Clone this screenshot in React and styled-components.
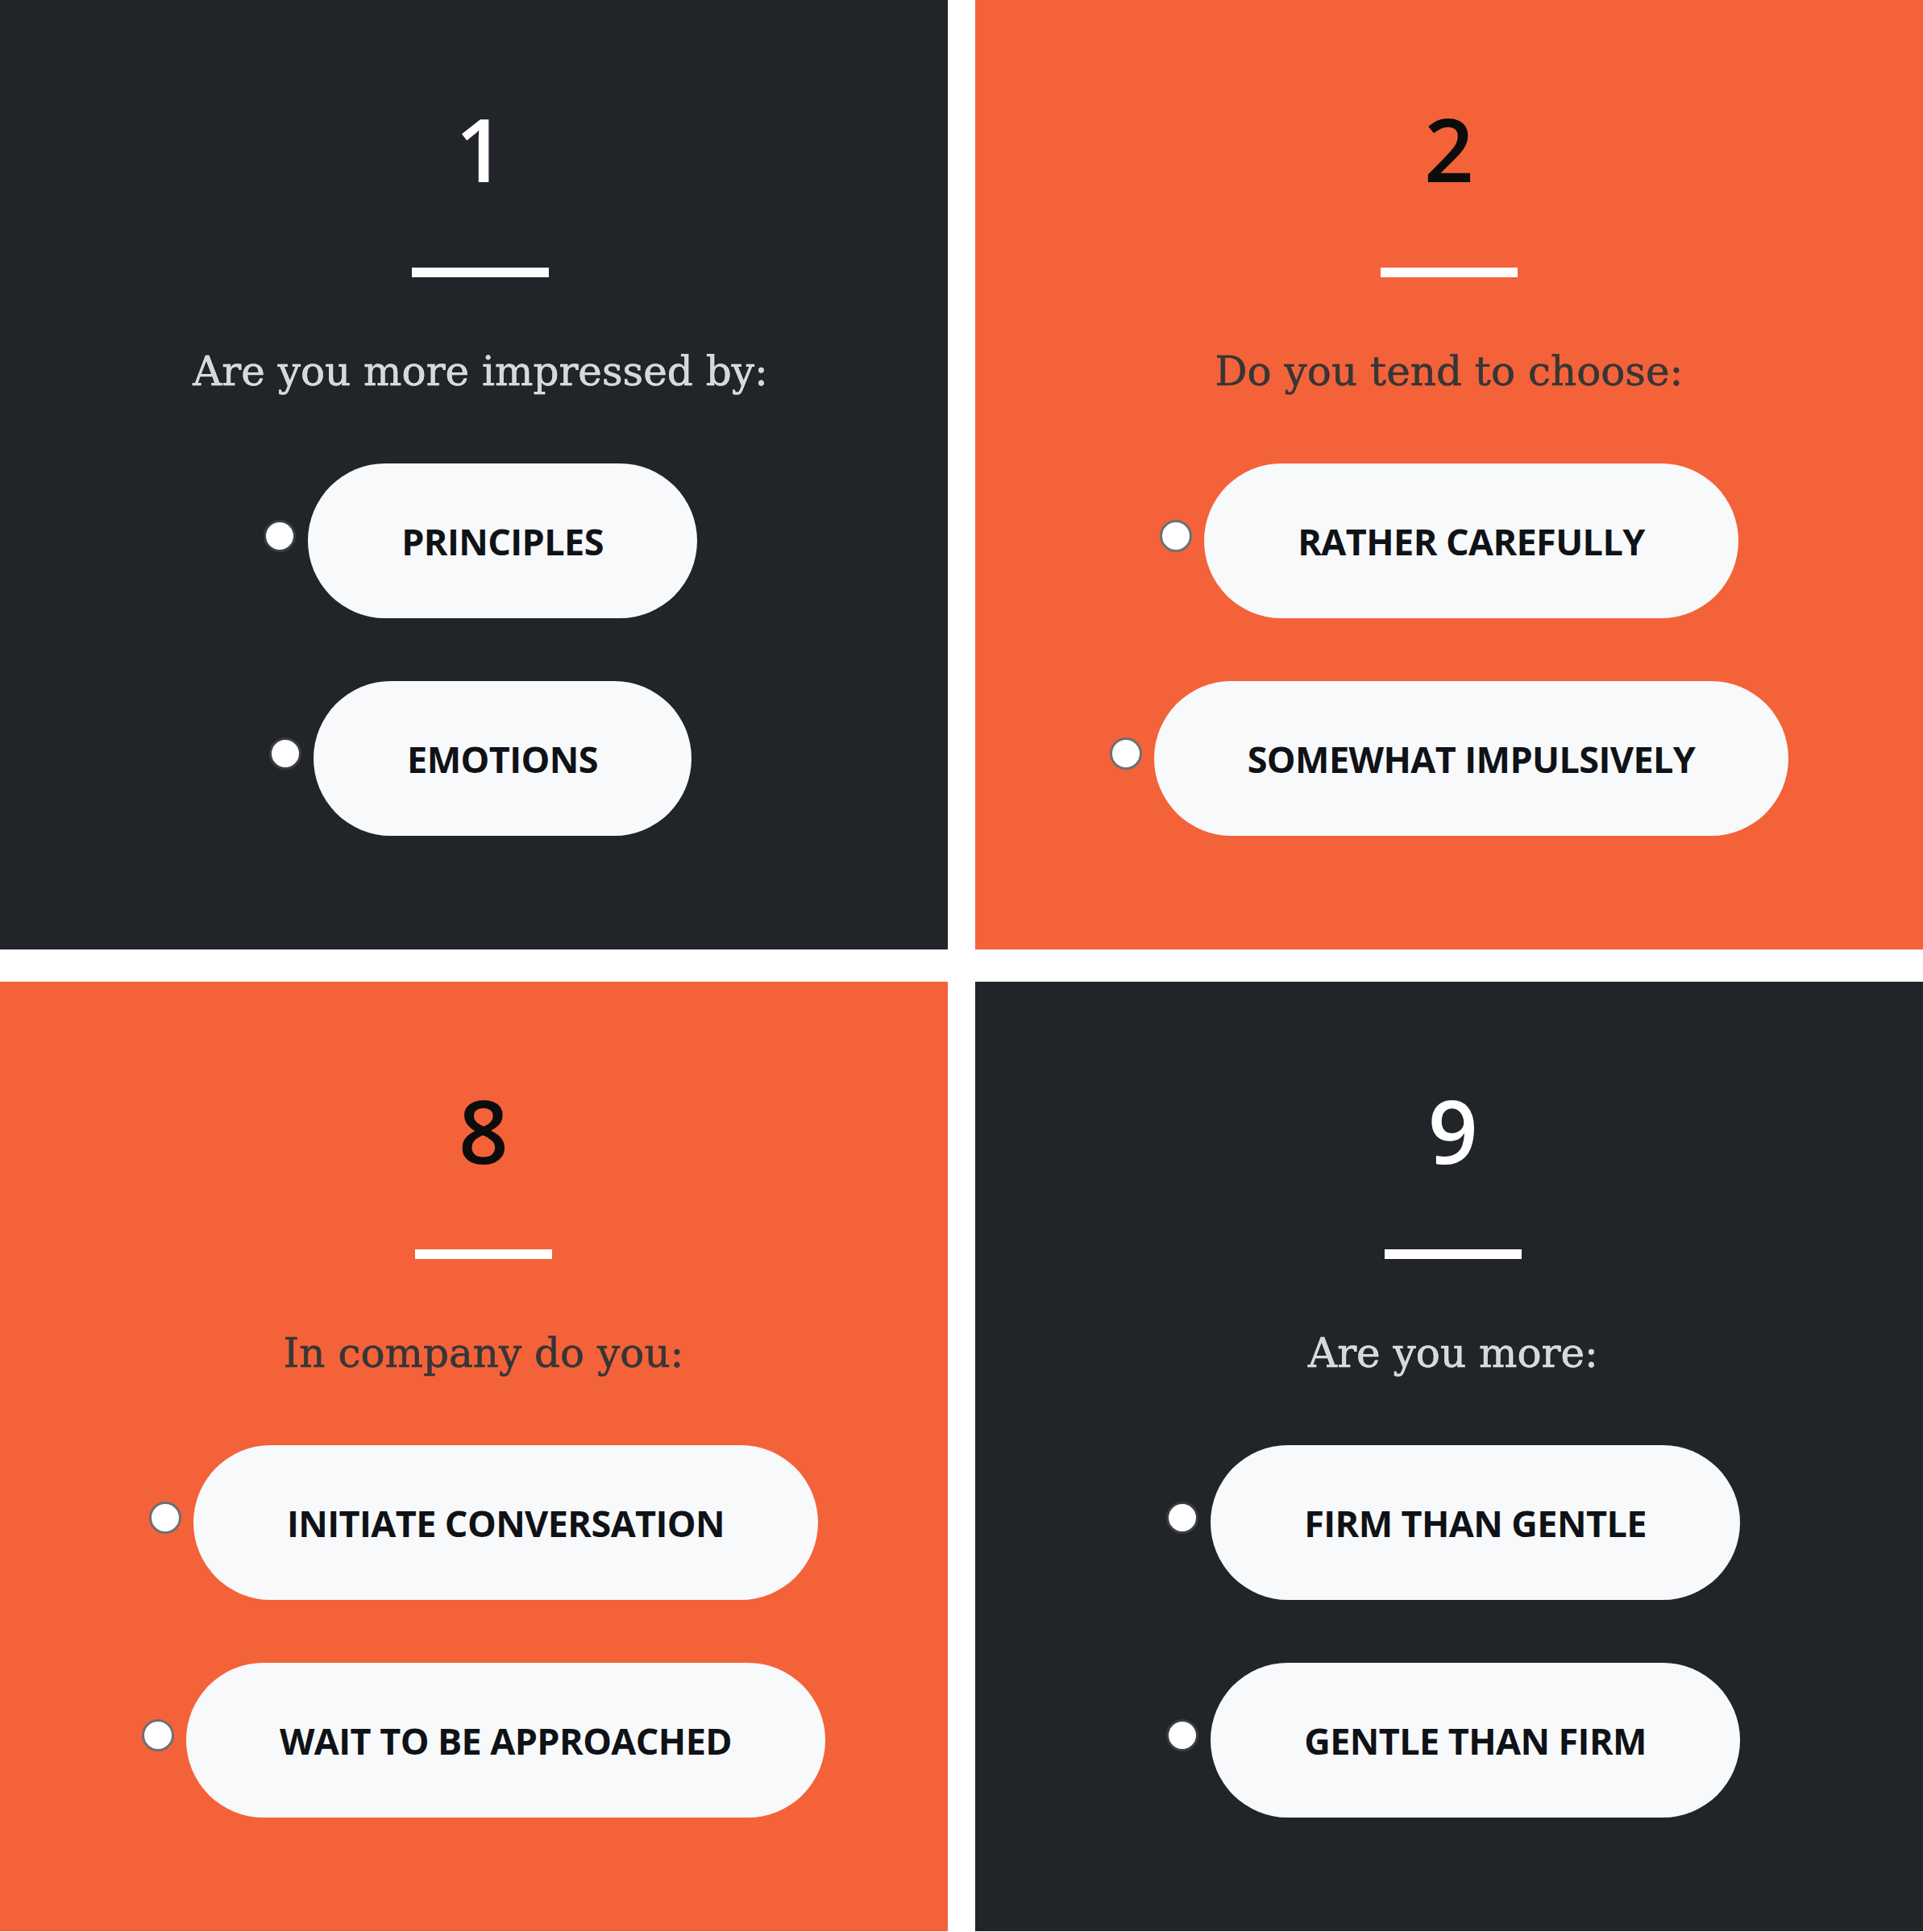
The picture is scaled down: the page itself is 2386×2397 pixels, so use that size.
import React from 'react'
import styled, { createGlobalStyle } from 'styled-components'

const GlobalStyle = createGlobalStyle`
  html, body {
    margin: 0;
    padding: 0;
    background: #ffffff;
  }
  * {
    box-sizing: border-box;
  }
`

const Board = styled.div`
  display: grid;
  grid-template-columns: 1176px 1176px;
  grid-auto-rows: 1178px;
  column-gap: 34px;
  row-gap: 40px;
  width: 2386px;
`

const Panel = styled.section`
  display: flex;
  flex-direction: column;
  align-items: center;
  padding-top: 131px;
  padding-left: ${(props) => props.$nudge}px;
  background: ${(props) => (props.$tone === 'dark' ? '#212429' : '#f4623a')};
  overflow: hidden;
`

const Number = styled.h2`
  margin: 0;
  font-family: 'Open Sans', 'Noto Sans', sans-serif;
  font-weight: 600;
  font-size: 108px;
  line-height: 1;
  color: ${(props) => (props.$tone === 'dark' ? '#ffffff' : '#0c0c0c')};
`

const Rule = styled.hr`
  width: 170px;
  height: 12px;
  margin: 93px 0 0;
  border: none;
  background: #ffffff;
`

const Question = styled.p`
  margin: 87px 0 0;
  font-family: 'DejaVu Serif', 'Liberation Serif', serif;
  font-size: 50px;
  line-height: 1.2;
  -webkit-text-stroke: 0.6px currentColor;
  color: ${(props) => (props.$tone === 'dark' ? 'rgba(255, 255, 255, 0.82)' : '#363636')};
`

const Options = styled.div`
  display: flex;
  flex-direction: column;
  align-items: center;
  gap: 78px;
  margin-top: 84px;
`

const Option = styled.label`
  display: flex;
  align-items: center;
  gap: 15px;
  cursor: pointer;
`

const Radio = styled.input.attrs({ type: 'radio' })`
  appearance: none;
  width: 40px;
  height: 40px;
  margin: 0 0 12px;
  border-radius: 50%;
  background: #ffffff;
  border: 3px solid ${(props) => (props.$tone === 'dark' ? '#3a3d42' : '#6f6f6f')};
`

const Choice = styled.span`
  display: flex;
  align-items: center;
  justify-content: center;
  height: 192px;
  padding: 0 116px;
  border-radius: 96px;
  background: #f8f9fa;
  font-family: 'Open Sans', 'Noto Sans', sans-serif;
  font-weight: 700;
  font-size: 45px;
  letter-spacing: -0.6px;
  line-height: 1;
  color: #0f1216;
  text-transform: uppercase;
  white-space: nowrap;
`

const questions = [
  { id: 1, tone: 'dark', nudge: 16, text: 'Are you more impressed by:', options: ['Principles', 'Emotions'] },
  { id: 2, tone: 'orange', nudge: 0, text: 'Do you tend to choose:', options: ['Rather carefully', 'Somewhat impulsively'] },
  { id: 8, tone: 'orange', nudge: 24, text: 'In company do you:', options: ['Initiate conversation', 'Wait to be approached'] },
  { id: 9, tone: 'dark', nudge: 10, text: 'Are you more:', options: ['Firm than gentle', 'Gentle than firm'] },
]

const App = () => {
  return (
    <>
      <GlobalStyle />
      <Board>
        {questions.map((q) => (
          <Panel key={q.id} $tone={q.tone} $nudge={q.nudge}>
            <Number $tone={q.tone}>{q.id}</Number>
            <Rule />
            <Question $tone={q.tone}>{q.text}</Question>
            <Options>
              {q.options.map((opt) => (
                <Option key={opt}>
                  <Radio name={`q${q.id}`} $tone={q.tone} />
                  <Choice>{opt}</Choice>
                </Option>
              ))}
            </Options>
          </Panel>
        ))}
      </Board>
    </>
  )
}

export default App
